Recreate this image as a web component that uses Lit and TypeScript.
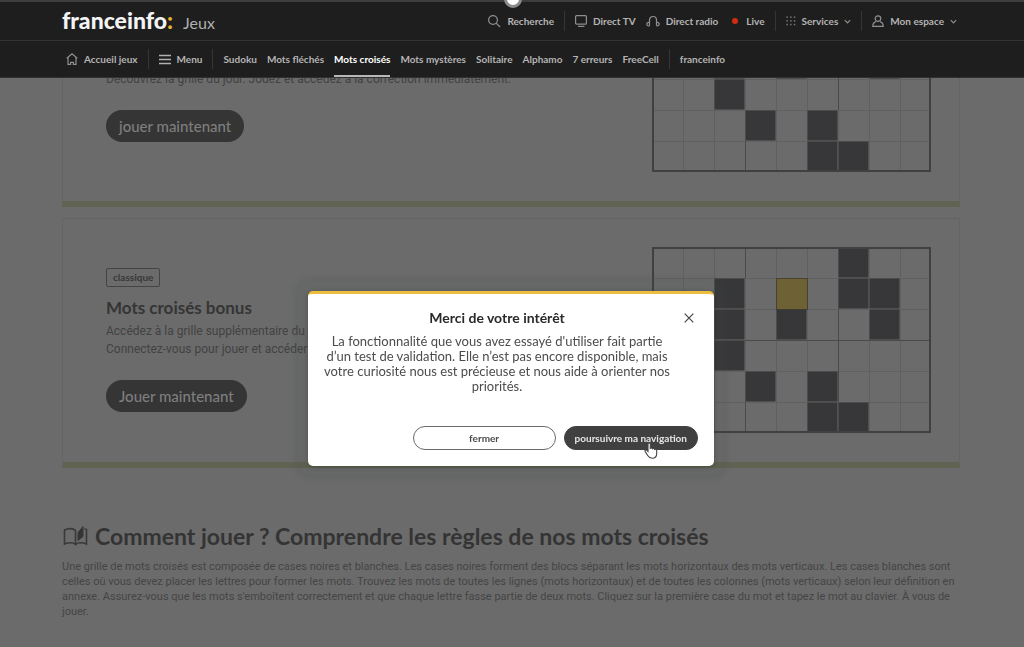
import { LitElement, html, svg, css, nothing } from "lit";
import { customElement, property } from "lit/decorators.js";
import { classMap } from "lit/directives/class-map.js";

const FULL_GRID = [
  "......#..",
  "..#.y.##.",
  "..#.#..#.",
  "..#......",
  "...#.#...",
  ".....##..",
];

const CELL = 31;

/** Miniature crossword illustration. */
@customElement("crossword-grid")
class CrosswordGrid extends LitElement {
  @property({ attribute: false }) rows: string[] = FULL_GRID;

  static styles = css`
    :host { display: block; }
    svg { display: block; }
    .line { stroke: #606060; stroke-width: 1; }
    .strong { stroke: #4a4a4a; stroke-width: 1; }
    .frame { fill: none; stroke: #404041; stroke-width: 2; }
    .black { fill: #373739; }
    .yellow { fill: #6f6136; stroke: #47412f; stroke-width: 1; }
  `;

  render() {
    const cols = this.rows[0].length;
    const w = cols * CELL;
    const h = this.rows.length * CELL;
    const cells = this.rows.flatMap((row, y) =>
      [...row].map((c, x) =>
        c === "."
          ? nothing
          : svg`<rect class=${c === "y" ? "yellow" : "black"} x=${x * CELL + 0.5} y=${y * CELL + 0.5} width=${CELL - (c === "y" ? 0 : 1)} height=${CELL - (c === "y" ? 0 : 1)}></rect>`
      )
    );
    const vertical = Array.from({ length: cols - 1 }, (_, i) => (i + 1) * CELL);
    const horizontal = Array.from({ length: this.rows.length - 1 }, (_, i) => (i + 1) * CELL);
    return html`<svg width=${w} height=${h} viewBox="0 0 ${w} ${h}" aria-hidden="true">
      ${vertical.map((x) => svg`<line class="line" x1=${x + 0.5} x2=${x + 0.5} y1="0" y2=${h}></line>`)}
      ${horizontal.map((y) => svg`<line class="line" x1="0" x2=${w} y1=${y + 0.5} y2=${y + 0.5}></line>`)}
      <line class="strong" x1="93.5" x2="93.5" y1=${h - 31} y2=${h}></line>
      ${this.rows.length === 6
        ? svg`<line class="strong" x1="93.5" x2="93.5" y1="0" y2="31"></line>
            <line class="strong" x1="93" x2="279" y1="93.5" y2="93.5"></line>
            <line class="strong" x1="186.5" x2="186.5" y1="62" y2="155"></line>`
        : svg`<line class="strong" x1="186.5" x2="186.5" y1="0" y2="62"></line>`}
      ${cells}
      <rect class="frame" x="1" y="1" width=${w - 2} height=${h - 2}></rect>
    </svg>`;
  }
}

const icon = (body: unknown, w = 12, h = 12) =>
  html`<svg class="icon" width=${w} height=${h} viewBox="0 0 ${w} ${h}" aria-hidden="true">${body}</svg>`;

const searchIcon = icon(svg`<circle cx="5" cy="5" r="4.4"></circle><path d="M8.2 8.2 12 12"></path>`, 13, 13);
const tvIcon = icon(svg`<rect x=".6" y=".6" width="10.8" height="8.600" rx="1"></rect><path d="M3 11.400h6.400"></path>`);
const radioIcon = icon(
  svg`<path d="M3.500 10.800V5a3.500 3.500 0 0 1 7 0v5.800"></path><path d="M3.500 7.400C1.700 7.200.8 8 .8 9.200s.9 1.800 2.700 1.600M10.500 7.400c1.800-.2 2.700.6 2.700 1.800s-.9 1.800-2.700 1.600"></path>`, 14, 12);
const servicesIcon = icon(
  [1, 4.7, 8.4].map((y) => [1, 4.7, 8.4].map((x) => svg`<rect class="solid" x=${x - 0.6} y=${y - 0.6} width="1.500" height="1.500"></rect>`)), 10, 10);
const userIcon = icon(svg`<circle cx="6" cy="3.600" r="2.800"></circle><path d="M4 6.600C1.800 7.200.8 8.800.8 11.300h10.400C11.200 8.800 10.200 7.200 8 6.600"></path>`);
const chevron = icon(svg`<path d="M.8 1.200 3.500 3.900 6.200 1.200"></path>`, 7, 5);
const homeIcon = icon(svg`<path d="M.7 5.200 6 .8 11.300 5.200M2 4.200V11.300H4.600V9.400h2.800v1.900H10V4.200"></path>`);
const burgerIcon = icon(svg`<path class="thick" d="M0 1.500h12M0 5.500h12M0 9.500h12"></path>`, 12, 11);

const GAMES = ["Sudoku", "Mots fléchés", "Mots croisés", "Mots mystères", "Solitaire", "Alphamo", "7 erreurs", "FreeCell"];

@customElement("site-header")
class SiteHeader extends LitElement {
  static styles = css`
    :host {
      display: block;
      background: #1e1e1e;
      border-top: 2px solid #3d3d3d;
      color: #b4b4b4;
      font: 700 10px/14px Lato, sans-serif;
    }
    a, button { color: inherit; font: inherit; text-decoration: none; background: none; border: 0; padding: 0; }
    a, button { display: flex; align-items: center; gap: 6px; white-space: nowrap; }
    .top { display: flex; align-items: center; height: 39px; padding: 0 67px 0 62px; border-bottom: 1px solid #323232; box-sizing: border-box; }
    .brand { gap: 10px; margin-right: auto; align-items: baseline; }
    .logo { font: 900 23px/28px Lato, sans-serif; color: #f4f4f4; }
    .colon { color: #e5b532; }
    .section { font: 400 16px/28px Lato, sans-serif; color: #b0b0b0; }
    .tools, .games { display: flex; align-items: center; gap: 10px; }
    .games { height: 37px; padding: 0 66px; border-bottom: 1px solid #303030; box-sizing: border-box; }
    .games a { height: 36px; padding-top: 2px; box-sizing: border-box; border-bottom: 2px solid transparent; }
    .games .active { color: #fff; border-bottom-color: #b8b8b8; }
    .rule { width: 1px; height: 20px; background: #353535; }
    .dot { width: 6px; height: 6px; border-radius: 3px; background: #d22c10; margin: 0 2px 0 4px; }
    .icon { fill: none; stroke: #8f8f8f; stroke-width: 1.2; flex: none; }
    .solid { fill: #777; stroke: none; }
    .thick { stroke: #b0b0b0; stroke-width: 1.6; }
  `;

  render() {
    return html`
      <div class="top">
        <a class="brand" href="#"><span class="logo">franceinfo<span class="colon">:</span></span><span class="section">Jeux</span></a>
        <div class="tools">
          <button>${searchIcon}Recherche</button>
          <span class="rule"></span>
          <a href="#">${tvIcon}Direct TV</a>
          <a href="#">${radioIcon}Direct radio</a>
          <a href="#"><span class="dot"></span>Live</a>
          <span class="rule"></span>
          <button>${servicesIcon}Services${chevron}</button>
          <span class="rule"></span>
          <button>${userIcon}Mon espace${chevron}</button>
        </div>
      </div>
      <nav class="games">
        <a href="#">${homeIcon}Accueil jeux</a>
        <span class="rule"></span>
        <a href="#">${burgerIcon}Menu</a>
        <span class="rule"></span>
        ${GAMES.map((g) => html`<a href="#" class=${classMap({ active: g === "Mots croisés" })}>${g}</a>`)}
        <span class="rule"></span>
        <a href="#">franceinfo</a>
      </nav>
    `;
  }
}

@customElement("app-root")
class AppRoot extends LitElement {
  static styles = css`
    :host {
      display: block;
      position: relative;
      min-height: 100vh;
      overflow: hidden;
      background: #6b6b6b;
      color: #424242;
      font: 12px/18px Roboto, sans-serif;
    }
    h2, h3, p { margin: 0; }
    button { font: inherit; cursor: pointer; }
    site-header { position: fixed; inset: 0 0 auto 0; z-index: 1; }
    .handle {
      position: fixed; z-index: 2; top: -10px; left: 50%; margin-left: -8px;
      width: 12px; height: 12px; border-radius: 50%;
      background: #fff; border: 3px solid #8b8b8b;
    }

    main { padding: 0 64px 0 62px; }
    .card {
      display: flex; align-items: center; justify-content: space-between;
      padding: 28px 28px 29px 43px;
      border: 1px solid #646464; border-bottom: 6px solid #616352;
      margin-bottom: 11px;
    }
    .card.scrolled { align-items: flex-start; padding-top: 48px; border-top: 0; }
    .scrolled .info { padding-top: 22px; }
    .info { display: flex; flex-direction: column; align-items: flex-start; white-space: nowrap; }
    .tag {
      font: 700 10px/17px Lato, sans-serif; color: #383838;
      border: 1px solid #444; border-radius: 2px; padding: 0 6px;
    }
    .card h3 { font: 700 17px/22px Lato, sans-serif; color: #353535; margin: 10px 0 3px; }
    .play {
      margin-top: 22px; height: 32px; padding: 0 13px; border: 0; border-radius: 16px;
      background: #353535; color: #7e7e7e; font: 500 15px/20px Lato, sans-serif;
    }

    .rules { padding-top: 43px; font-size: 11px; line-height: 15px; color: #454545; }
    .rules h2 {
      display: flex; align-items: center; gap: 6px; margin-bottom: 9px;
      font: 700 23px/28px Lato, sans-serif; color: #343434;
    }

    .layer {
      position: fixed; inset: 0; z-index: 3; display: flex;
      align-items: flex-start; justify-content: center; padding: 291px 2px 0 0;
    }
    .modal {
      box-sizing: border-box; width: 406px; padding: 15px 16px 16px;
      background: #fff; border-top: 3px solid #ecbd3f; border-radius: 5px;
      box-shadow: 0 0 4px 14px rgba(66, 74, 72, 0.12), 0 1px 5px rgba(0, 0, 0, 0.25);
      color: #4c4c4c; font: 13px/15px Lato, sans-serif; text-align: center;
    }
    .text { padding: 0 28px 0 0; }
    .modal h2 { font: 700 14px/18px Lato, sans-serif; color: #2a2a2a; margin-bottom: 7px; }
    .head { display: grid; grid-template-columns: 1fr 28px; }
    .close { border: 0; background: none; padding: 0 0 0 10px; height: 18px; display: flex; align-items: center; justify-content: center; }
    .close svg { display: block; stroke: #444; stroke-width: 1.2; }
    .actions { display: flex; justify-content: flex-end; gap: 8px; margin-top: 32px; }
    .actions button {
      height: 24px; border-radius: 12px; border: 1px solid #6a6a6a; background: #fff;
      color: #4a4a4a; font: 700 10px/14px Lato, sans-serif; padding: 0 10px;
    }
    .actions .ghost { width: 143px; }
    .actions .primary { background: #404040; border-color: #404040; color: #e6e6e6; }
    .cursor { position: fixed; z-index: 4; left: 644px; top: 442px; }
  `;

  render() {
    return html`
      <site-header></site-header>
      <div class="handle"></div>
      <main>
        <section class="card scrolled">
          <div class="info">
            <p>Découvrez la grille du jour. Jouez et accédez à la correction immédiatement.</p>
            <button class="play">jouer maintenant</button>
          </div>
          <crossword-grid .rows=${FULL_GRID.slice(2)}></crossword-grid>
        </section>
        <section class="card">
          <div class="info">
            <span class="tag">classique</span>
            <h3>Mots croisés bonus</h3>
            <p>Accédez à la grille supplémentaire du jour.<br />Connectez-vous pour jouer et accéder</p>
            <button class="play">Jouer maintenant</button>
          </div>
          <crossword-grid></crossword-grid>
        </section>
        <section class="rules">
          <h2>
            <svg width="27" height="22" viewBox="0 0 27 22" fill="none" stroke="#393939" stroke-width="1.600" aria-hidden="true">
              <path d="M13.500 19.500c-1.400-1.300-3-1.700-5-1.700-2.200 0-4.200.4-6 1.200V5c1.800-1 3.800-1.400 6-1.400 2 0 3.600.5 5 1.700z"></path>
              <path d="M13.500 19.500c1.400-1.300 3-1.700 5-1.700 2.200 0 4.200.4 6 1.200V4.500l-2-.7"></path>
              <path d="M16 7.500 21 1.500V11.500L16 15.500z" fill="#343434" stroke-width="1"></path>
            </svg>
            Comment jouer ? Comprendre les règles de nos mots croisés
          </h2>
          <p>
            Une grille de mots croisés est composée de cases noires et blanches. Les cases noires forment des blocs séparant
            les mots horizontaux des mots verticaux. Les cases blanches sont celles où vous devez placer les lettres pour
            former les mots. Trouvez les mots de toutes les lignes (mots horizontaux) et de toutes les colonnes (mots
            verticaux) selon leur définition en annexe. Assurez-vous que les mots s'emboîtent correctement et que chaque
            lettre fasse partie de deux mots. Cliquez sur la première case du mot et tapez le mot au clavier. À vous de jouer.
          </p>
        </section>
      </main>
      <div class="layer">
        <div class="modal" role="dialog" aria-labelledby="modal-title">
          <div class="head">
            <h2 id="modal-title">Merci de votre intérêt</h2>
            <button class="close" aria-label="Fermer">
              <svg width="10" height="10" viewBox="0 0 10 10"><path d="M.7.7 9.300 9.300M9.300.7.7 9.300"></path></svg>
            </button>
          </div>
          <p class="text">
            La fonctionnalité que vous avez essayé d'utiliser fait partie d’un test de validation. Elle n’est pas encore
            disponible, mais votre curiosité nous est précieuse et nous aide à orienter nos priorités.
          </p>
          <div class="actions">
            <button class="ghost">fermer</button>
            <button class="primary">poursuivre ma navigation</button>
          </div>
        </div>
      </div>
      <svg class="cursor" width="14" height="17" viewBox="0 0 14 17" fill="#fff" stroke="#444" stroke-width="1.100" aria-hidden="true">
        <path d="M4 9.500V2.200C4 .4 6.300.4 6.300 2.200V6.300C7 5.600 8.300 5.800 8.500 6.800 9.300 6.200 10.400 6.500 10.600 7.400 11.600 7 12.700 7.500 12.700 8.800V11.500C12.700 14.500 11 16.200 8.200 16.200 5.800 16.200 4.700 15.200 3.700 13.500L1.200 9.600C.5 8.300 2 7.400 2.900 8.400z"></path>
      </svg>
    `;
  }
}
